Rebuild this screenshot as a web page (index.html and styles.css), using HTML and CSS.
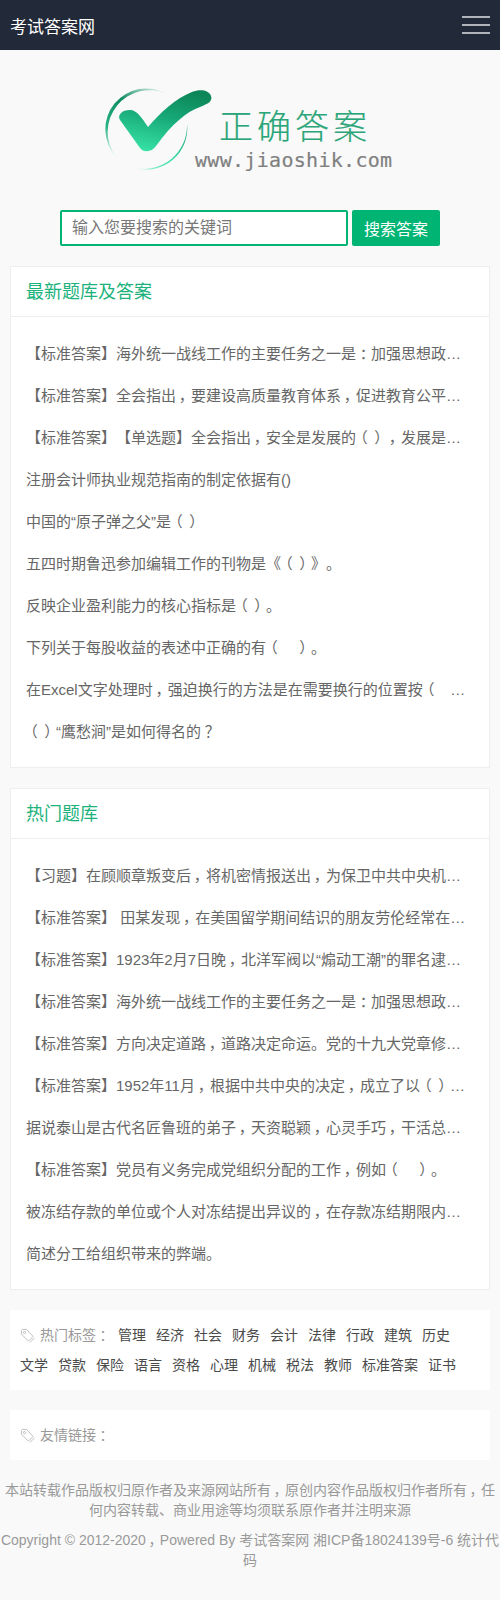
FILE: index.html
```html
<!DOCTYPE html>
<html lang="zh-CN">
<head>
    <meta charset="UTF-8">
    <meta name="viewport" content="width=device-width, initial-scale=1.0">
    <title>考试答案网</title>
    <link rel="stylesheet" href="styles.css">
</head>
<body>
    <div class="header">
        <a class="brand">考试答案网</a>
        <div class="menu-btn">
            <span></span>
            <span></span>
            <span></span>
        </div>
    </div>

    <div class="logo">
        <svg width="300" height="100" viewBox="100 80 300 100">
            <defs>
                <linearGradient id="checkFill" x1="0.7" y1="0" x2="0.35" y2="1">
                    <stop offset="0" stop-color="#0c8558"/>
                    <stop offset="0.45" stop-color="#17a877"/>
                    <stop offset="1" stop-color="#36e0a4"/>
                </linearGradient>
                <linearGradient id="ringDark" x1="0.8" y1="0" x2="0.2" y2="1">
                    <stop offset="0" stop-color="#c8e8dc"/>
                    <stop offset="0.35" stop-color="#0f8c60"/>
                    <stop offset="0.75" stop-color="#26b285"/>
                    <stop offset="1" stop-color="#d0f0e4"/>
                </linearGradient>
                <linearGradient id="ringLight" x1="1" y1="0" x2="0" y2="1">
                    <stop offset="0" stop-color="#1fa67a"/>
                    <stop offset="0.6" stop-color="#3fe0a8"/>
                    <stop offset="1" stop-color="#c8f4e4"/>
                </linearGradient>
            </defs>
            <path fill="url(#ringDark)" d="M167 94 A41 41 0 0 0 116 157 A41.8 41.8 0 0 1 167 94 Z"/>
            <path fill="url(#ringLight)" d="M187 124 A41 41 0 0 1 135 168 A43.3 43.3 0 0 0 187 124 Z"/>
            <path fill="url(#checkFill)" d="M120 120 C117 115 122 110 130 110 C137 110 142 118 148 127 C160 113 176 98 192 92 C200 89 209 90 211 96 C213 102 207 104 200 107 C186 112 172 124 156 146 C152 152 144 153 140 148 Z"/>
            <text class="logo-name" x="219" y="139">正确答案</text>
            <text class="logo-url" x="195" y="167">www.jiaoshik.com</text>
        </svg>
    </div>

    <form class="search">
        <input type="text" class="search-input" placeholder="输入您要搜索的关键词">
        <button type="button" class="search-btn">搜索答案</button>
    </form>

    <div class="card">
        <h3 class="card-title">最新题库及答案</h3>
        <ul class="card-list">
            <li>【标准答案】海外统一战线工作的主要任务之一是<span class="pt">：</span>加强思想政治引领，广泛凝聚共识</li>
            <li>【标准答案】全会指出<span class="pt">，</span>要建设高质量教育体系<span class="pt">，</span>促进教育公平，提高教育质量</li>
            <li>【标准答案】【单选题】全会指出<span class="pt">，</span>安全是发展的<span class="pt">（</span><span class="pt">）</span><span class="pt">，</span>发展是安全的保障</li>
            <li>注册会计师执业规范指南的制定依据有()</li>
            <li>中国的“原子弹之父”是<span class="pt">（</span><span class="pt">）</span></li>
            <li>五四时期鲁迅参加编辑工作的刊物是《<span class="pt">（</span><span class="pt">）</span>》。</li>
            <li>反映企业盈利能力的核心指标是<span class="pt">（</span><span class="pt">）</span>。</li>
            <li>下列关于每股收益的表述中正确的有<span class="pt">（</span>　<span class="pt">）</span>。</li>
            <li>在Excel文字处理时<span class="pt">，</span>强迫换行的方法是在需要换行的位置按<span class="pt">（</span>&nbsp;&nbsp;&nbsp;&nbsp;<span class="pt">）</span>键</li>
            <li><span class="pt">（</span><span class="pt">）</span>“鹰愁涧”是如何得名的<span class="pt">？</span></li>
        </ul>
    </div>

    <div class="card">
        <h3 class="card-title">热门题库</h3>
        <ul class="card-list">
            <li>【习题】在顾顺章叛变后<span class="pt">，</span>将机密情报送出<span class="pt">，</span>为保卫中共中央机关作出贡献的是</li>
            <li>【标准答案】 田某发现<span class="pt">，</span>在美国留学期间结识的朋友劳伦经常在网上发表言论</li>
            <li>【标准答案】1923年2月7日晚<span class="pt">，</span>北洋军阀以“煽动工潮”的罪名逮捕了工会领袖</li>
            <li>【标准答案】海外统一战线工作的主要任务之一是<span class="pt">：</span>加强思想政治引领，广泛凝聚共识</li>
            <li>【标准答案】方向决定道路<span class="pt">，</span>道路决定命运。党的十九大党章修正案明确规定</li>
            <li>【标准答案】1952年11月<span class="pt">，</span>根据中共中央的决定<span class="pt">，</span>成立了以<span class="pt">（</span><span class="pt">）</span>为书记的机构</li>
            <li>据说泰山是古代名匠鲁班的弟子<span class="pt">，</span>天资聪颖<span class="pt">，</span>心灵手巧<span class="pt">，</span>干活总是又快又好</li>
            <li>【标准答案】党员有义务完成党组织分配的工作<span class="pt">，</span>例如<span class="pt">（</span>　<span class="pt">）</span>。</li>
            <li>被冻结存款的单位或个人对冻结提出异议的<span class="pt">，</span>在存款冻结期限内可以提出复议</li>
            <li>简述分工给组织带来的弊端。</li>
        </ul>
    </div>

    <div class="panel">
        <span class="panel-label">
            <svg class="tag-icon" viewBox="0 0 16 16"><path d="M1.5 2.5l1-1H7l7 7.500-5 5-7.500-7.500z"/><path d="M15.500 10.500l-5 5"/><circle cx="4.800" cy="4.800" r="1.200"/></svg>
            热门标签<span class="pt">：</span>
        </span>
        <a>管理</a>
        <a>经济</a>
        <a>社会</a>
        <a>财务</a>
        <a>会计</a>
        <a>法律</a>
        <a>行政</a>
        <a>建筑</a>
        <a>历史</a>
        <a>文学</a>
        <a>贷款</a>
        <a>保险</a>
        <a>语言</a>
        <a>资格</a>
        <a>心理</a>
        <a>机械</a>
        <a>税法</a>
        <a>教师</a>
        <a>标准答案</a>
        <a>证书</a>
    </div>

    <div class="panel">
        <span class="panel-label">
            <svg class="tag-icon" viewBox="0 0 16 16"><path d="M1.5 2.5l1-1H7l7 7.500-5 5-7.500-7.500z"/><path d="M15.500 10.500l-5 5"/><circle cx="4.800" cy="4.800" r="1.200"/></svg>
            友情链接<span class="pt">：</span>
        </span>
    </div>

    <div class="footer">
        <p>本站转载作品版权归原作者及来源网站所有<span class="pt">，</span>原创内容作品版权归作者所有<span class="pt">，</span>任何内容转载、商业用途等均须联系原作者并注明来源</p>
        <p>Copyright © 2012-2020<span class="pt">，</span>Powered By 考试答案网 湘ICP备18024139号-6 统计代码</p>
    </div>
</body>
</html>
```

FILE: styles.css
```css
* {
    margin: 0;
    padding: 0;
    box-sizing: border-box;
}

body {
    font-family: "Liberation Sans", "Noto Sans CJK SC", sans-serif;
    background-color: #f9f9f9;
    font-size: 14px;
    color: #666;
    text-spacing-trim: space-all;
}

/* full-width punctuation sits mid-cell on the original */
.pt {
    display: inline-block;
    width: 1em;
    text-align: center;
    font-feature-settings: "palt";
}

.header {
    background: #222938;
    height: 50px;
    padding: 0 10px;
    display: flex;
    align-items: center;
    justify-content: space-between;
}

.brand {
    font-size: 17px;
    color: #fff;
}

.menu-btn {
    width: 28px;
    display: flex;
    flex-direction: column;
    gap: 6px;
}

.menu-btn span {
    height: 2px;
    background: #b0b3b9;
}

.logo {
    padding-top: 30px;
    display: flex;
    justify-content: center;
}

.logo-name {
    font-size: 34px;
    font-weight: 300;
    letter-spacing: 4px;
    fill: #2aa578;
    stroke: #2aa578;
    stroke-width: 0.2px;
}

.logo-url {
    font-family: "DejaVu Sans Mono", monospace;
    font-size: 20px;
    letter-spacing: 0.3px;
    fill: #808080;
    stroke: #808080;
    stroke-width: 0.2px;
}

.search {
    margin-top: 30px;
    display: flex;
    justify-content: center;
    gap: 4px;
}

.search-input {
    width: 288px;
    height: 36px;
    padding: 0 10px;
    border: 2px solid #00b574;
    border-radius: 2px;
    background: #fff;
    font-family: inherit;
    font-size: 16px;
    outline: none;
}

.search-input::placeholder {
    color: #777;
}

.search-btn {
    width: 88px;
    height: 36px;
    background: #00b574;
    border: none;
    border-radius: 2px;
    color: #fff;
    font-family: inherit;
    font-size: 16px;
}

.card {
    margin: 20px 10px 0;
    background: #fff;
    border: 1px solid #eee;
}

.card-title {
    height: 50px;
    padding: 0 15px;
    line-height: 51px;
    font-size: 18px;
    font-weight: normal;
    color: #1cb27b;
    border-bottom: 1px solid #eee;
}

.card-list {
    list-style: none;
    padding: 16px 22px 14px 15px;
}

.card-list li {
    line-height: 42px;
    font-size: 15px;
    white-space: nowrap;
    overflow: hidden;
    text-overflow: ellipsis;
}

.panel {
    margin: 20px 10px 0;
    padding: 10px;
    background: #fff;
    line-height: 30px;
    display: flex;
    flex-wrap: wrap;
    column-gap: 10px;
}

.panel a {
    color: #4a4a4a;
}

.panel-label {
    color: #999;
    margin-right: -2px;
    white-space: nowrap;
}

.tag-icon {
    width: 15px;
    height: 15px;
    margin-right: 1px;
    vertical-align: -3px;
    fill: none;
    stroke: #bbb;
    stroke-width: 1;
}

.footer {
    margin-top: 20px;
    padding-bottom: 30px;
    text-align: center;
    line-height: 20px;
    color: #999;
}

.footer p {
    margin-bottom: 10px;
}
```
